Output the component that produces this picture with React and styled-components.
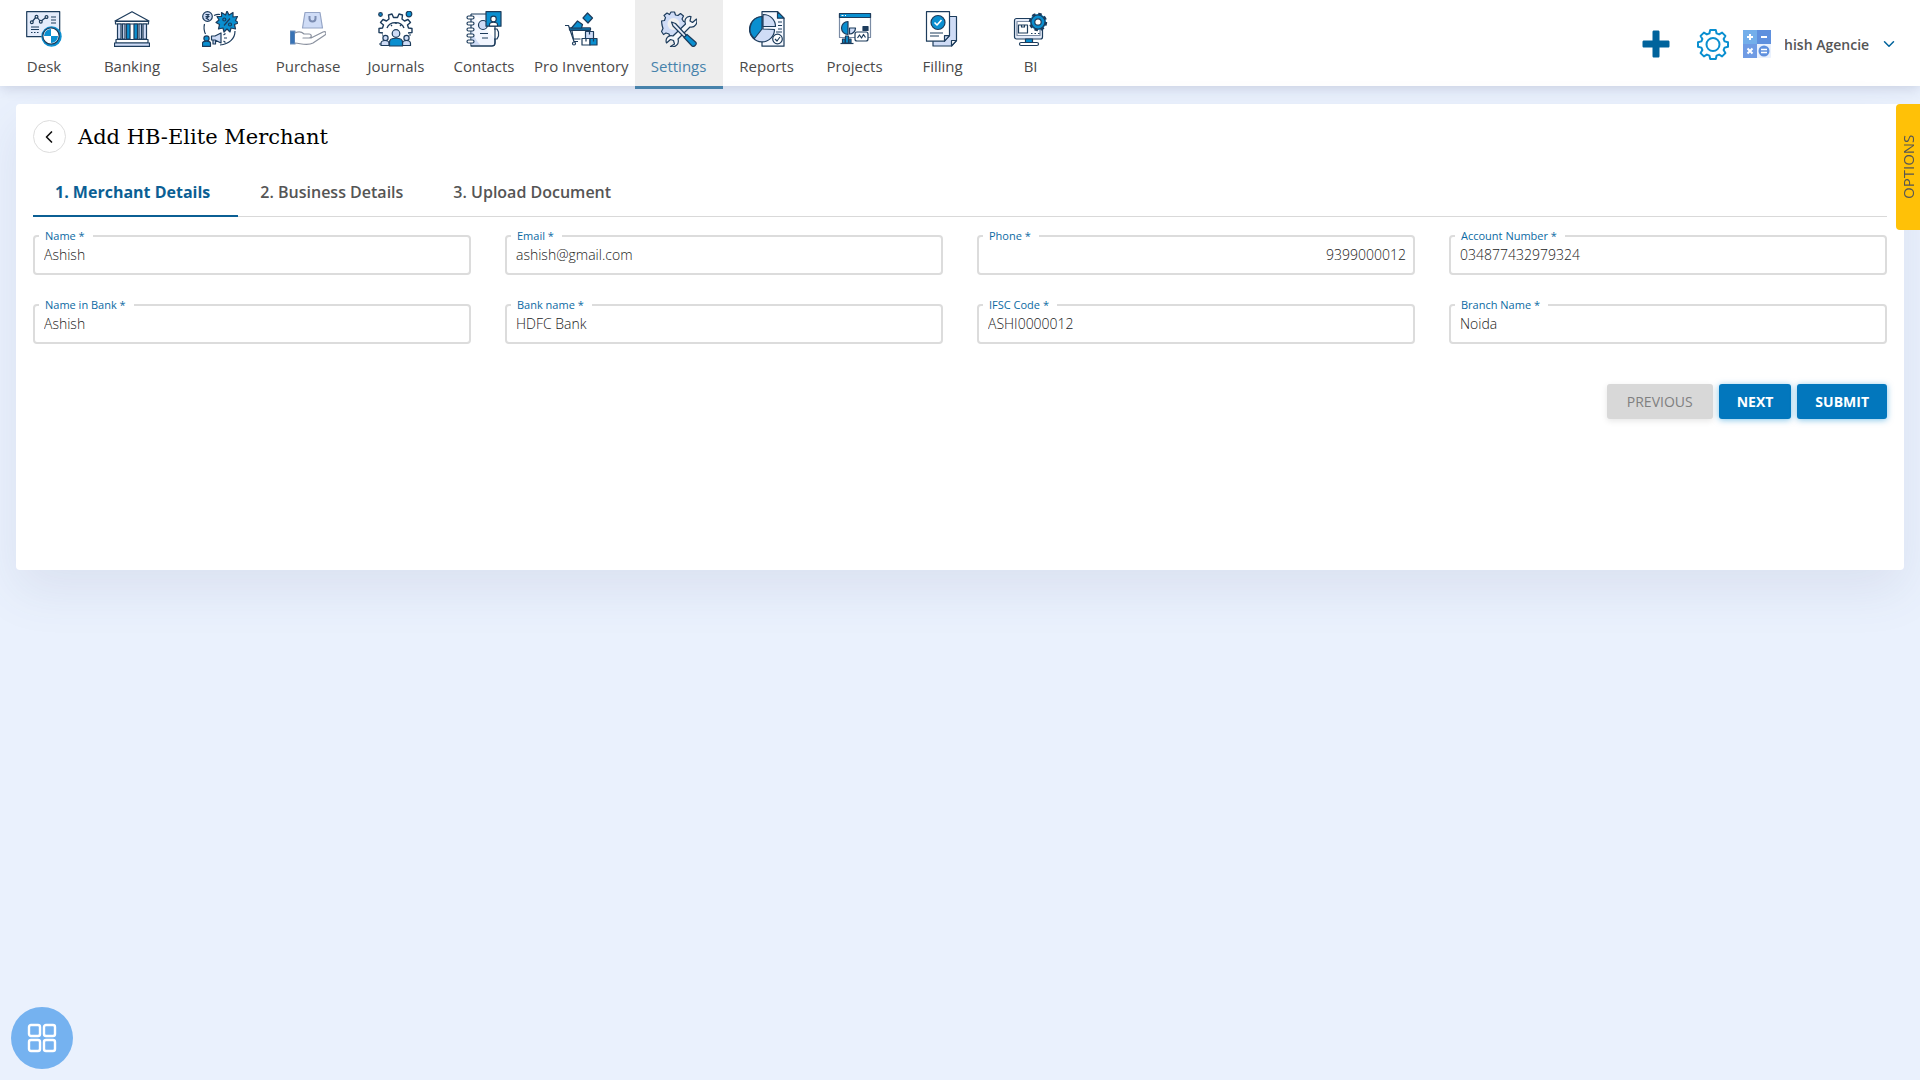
import { useState } from 'react';
import styled, { createGlobalStyle } from 'styled-components';
import { FiChevronDown, FiChevronLeft } from 'react-icons/fi';

const NAVY = '#1d3c5c';
const BLUE = '#0a8fd0';
const PALE = '#cfdcf6';

const GlobalStyle = createGlobalStyle`
* {
  box-sizing: border-box;
}
body {
  margin: 0;
  min-height: 100vh;
  background: #eaf1fd;
  color: #555;
  font-family: "Open Sans", "Noto Sans", sans-serif;
}
button, input {
  font-family: inherit;
}
`;

const icons = {
  desk: (
    <>
      <rect x="0.7" y="0.7" width="33" height="25" fill="#e4ecfb" />
      <path d="M5.5 11.5 L10.5 5.5 L14.5 10.5 L20.5 6" />
      <g fill="#fff">
        <circle cx="5.8" cy="11.2" r="1.4" />
        <circle cx="10.5" cy="5.8" r="1.4" />
        <circle cx="14.8" cy="10.8" r="1.4" />
        <circle cx="20.5" cy="6" r="1.4" />
      </g>
      <path d="M25 6h5M25 9h5M25 12h5M5 16h8M5 18.5h8M5 21.5h1.5M8 21.5h1.5M11 21.5h1.5" />
      <circle cx="25.5" cy="25.5" r="9.6" fill={BLUE} stroke={BLUE} />
      <circle cx="25" cy="25" r="8.2" fill="#fff" />
      <path d="M25 25V18a7 7 0 0 0-7 7zM25 25v7a7 7 0 0 0 7-7z" fill={BLUE} stroke="none" />
    </>
  ),
  banking: (
    <>
      <path d="M18 0.7L1 10h34z" fill="#fff" />
      <path d="M1.5 10.5h33v2.5h-33z" fill="#fff" />
      <path d="M3.5 13h3.5v15h-3.5zM29 13h3.5v15h-3.5zM8.5 13h2.5v15h-2.5zM25 13h2.5v15h-2.5z" fill={PALE} />
      <path d="M12.5 13h3.5v15h-3.5zM20 13h3.5v15h-3.5z" fill={BLUE} />
      <path d="M2 28.5h32v3.5H2z" fill="#fff" />
      <path d="M0.5 32h35v3.3h-35z" fill={PALE} />
    </>
  ),
  sales: (
    <>
      <circle cx="5.5" cy="5.5" r="4.8" fill={PALE} />
      <path d="M3.5 3.5h4M3.5 5.5h4M4 3.5c3 0 3 3.5 0 3.5l3 2" />
      <path d="M12 4.5c2-1 4-1.5 6-1M2.5 13c-1 4-.5 7 1 10M33 20c0 8-6 13-15 14" />
      <path
        d="M25 0l2 4 4-2.5 0 4.5 4.5-.5-2 4 3 2.500-4 1.500 1 4.500-4.500-1-1 4-3-3-3 3-1-4-4.500 1 1-4.500-3.500-2 3-2.500-2-3.500 4.500 0 0-4 4 2.500z"
        fill={BLUE}
      />
      <path d="M22 14.5l6-7" />
      <circle cx="22.3" cy="8.5" r="1.5" />
      <circle cx="28" cy="13.5" r="1.5" />
      <circle cx="4.5" cy="27.5" r="2.6" fill={BLUE} />
      <path d="M.5 35.300v-3c0-3 8-3 8 0v3z" fill={BLUE} />
      <path d="M9.500 25h3.500l6-3v10l-6-3H9.500zM11 29v4h2.500v-4" fill={PALE} />
      <path d="M21.500 24l2-1.500M22 27h3M21.500 30l2 1.500" />
    </>
  ),
  purchase: (
    <>
      <path d="M15 1.500h15l2.500 15.500h-20z" fill={PALE} stroke="#95a5c6" />
      <path d="M19.500 5v2.500c0 4 6 4 6 0V5" stroke="#7b8cb1" strokeWidth="2" />
      <path d="M0 20h5v13H0z" fill="#3873b5" stroke="#6c8fbd" />
      <path
        d="M5 22c4-2 7-1 9 1h5c3 0 3 4 0 4h-6 8l12-6c3-1 4 1 2 3L23 32c-5 3-10 1-18 0"
        fill="#fff"
        stroke="#8a919f"
      />
    </>
  ),
  journals: (
    <>
      <path
        d="M5 22l-4-.5 0-4 3.500-.5 1-3-3-2.500 2.500-3 3.500 1.500 2.500-2-.5-4 3.500-1 1.500 3.500h4l1.500-3.500 3.500 1-.5 4 2.500 2 3.500-1.500 2.500 3-3 2.500 1 3 3.500.5v4l-4 .5"
        fill="#fff"
        strokeWidth="1.4"
      />
      <path d="M9 17a9 8 0 0 1 17 0M13 15l1-1M18 12v1M23 15l-1-1" strokeWidth="1.4" />
      <circle cx="2.500" cy="3.500" r="1.800" fill={BLUE} />
      <circle cx="31" cy="3" r="2.800" fill={BLUE} />
      <path d="M1 33h2M4 24h1M31 24h2" />
      <g fill={PALE}>
        <circle cx="7.500" cy="27" r="2.600" />
        <path d="M3 34.500v-2c0-4 8-4 8 0v2z" />
        <circle cx="28.500" cy="27" r="2.600" />
        <path d="M24.500 34.500v-2c0-4 8-4 8 0v2z" />
        <circle cx="18" cy="22.500" r="3.800" />
      </g>
      <path d="M11.500 35v-4c0-5 13-5 13 0v4z" fill={BLUE} />
    </>
  ),
  contacts: (
    <>
      <path d="M5 3h24v11.500M5 3v32h21c2 0 3-1 3-3v-4" fill="#f2f6ff" />
      <path d="M5.500 18v16h9c-5-5-7-10-9-16z" fill={PALE} stroke="none" />
      <path d="M29 14.500v17c0 2-1 3.500-3 3.500H5M28 18h3l1.500 3v4L31 28h-3" />
      <g fill="#fff">
        <rect x="1" y="5" width="7" height="3" rx="1.500" />
        <rect x="1" y="11" width="7" height="3" rx="1.500" />
        <rect x="1" y="17" width="7" height="3" rx="1.500" />
        <rect x="1" y="23" width="7" height="3" rx="1.500" />
        <rect x="1" y="29" width="7" height="3" rx="1.500" />
      </g>
      <circle cx="17" cy="14" r="4.500" fill={PALE} />
      <path d="M14 22.500h8M16 27h6" />
      <rect x="20" y="0.700" width="15" height="14.500" fill={BLUE} />
      <circle cx="27.500" cy="8" r="2.800" fill="#fff" />
      <path d="M23.500 15v-1.500c0-3 8-3 8 0V15z" fill="#fff" />
    </>
  ),
  inventory: (
    <>
      <path d="M2 14.500h3.500l5.500 16h4" />
      <path d="M7 17h20v2.500H7.500zM9 20l1.500 8h7" fill="#fff" />
      <path d="M6.500 17h21v2h-21z" fill={BLUE} />
      <path d="M8.500 17l6-7 5 3.500-1 3.500z" fill={BLUE} />
      <path d="M24.500 2l5 5-4.500 5-5-5z" fill={BLUE} />
      <circle cx="11" cy="32.500" r="1.500" />
      <path d="M22.500 20.500h8v7h-8z" fill={PALE} />
      <path d="M19 27.500h8v6.500h-8z" fill="#fff" />
      <path d="M27 27.500h7v6.500h-7z" fill={BLUE} />
      <path d="M26.500 20.500v3M23 27.500v3M30.500 27.500v3" />
    </>
  ),
  settings: (
    <>
      <path
        d="M10 1h3.500l1 3 2.500.5 2.500-2 3 2.500-1.500 3 1.500 2.500 3 .5v3.500l-3 1-1 3 1 2.500-3 3-3-1.500-3 1-1 2.500H9l-1-3-3-1-2.500 1.500-2-3 1.500-3L1 14l-.5-4 3-.5 1-3L3 4.500l3-2.500 2.500 1.500z"
        fill={PALE}
      />
      <circle cx="12.500" cy="13" r="6" fill="#f0f0f0" stroke="none" />
      <path d="M30 5.500c-5-1-7 4-5.500 7.500L12 25c-5-1.500-8 3-6.500 7l4-3.500 3 1 1 3.500-4 2.500c5 1.500 9-2.500 7.500-7.500L29 16c5 1 8-4 6.500-8l-4 3.500-2.500-1.500z" fill="#f4f6fa" />
      <path d="M10.500 11l4 1.500 11 12-2 2-11.500-11.500z" fill="#e8edf8" />
      <path d="M23 26.500l3-3 9 8c1 2-2 5-4 3.500z" fill={BLUE} />
    </>
  ),
  reports: (
    <>
      <path d="M13 .7h15.500l6.500 6.500v28H13z" fill="#f5f8ff" />
      <path d="M28.500.7v6.500H35z" fill={BLUE} />
      <path d="M14 6a12.500 12.500 0 1 0 11.500 12.500L14 18z" fill={PALE} />
      <path d="M13 5.500a12.500 12.500 0 0 0-7.500 22L13 18z" fill={BLUE} />
      <path d="M14 3.500a12 12 0 0 1 12.500 12H14z" fill={PALE} />
      <path d="M29 11h4M29 14.500h4M29 18h4M27 21h6" />
      <circle cx="28.500" cy="28" r="4.800" fill="#fff" />
      <path d="M26 28l2 2 3-4" />
    </>
  ),
  projects: (
    <>
      <path d="M2.500 2.500h31v24h-31z" fill="#fff" stroke="#7b8ca5" />
      <path d="M2.500 2.500h31v4h-31z" fill={BLUE} />
      <path d="M4.500 4.500h2M8 4.500h1" stroke="#fff" />
      <path d="M11 10.500a6.500 6.500 0 0 0 0 13z" fill={BLUE} />
      <path d="M12.500 17h6a6 6 0 0 1-6 6z" fill={PALE} />
      <path d="M26 15.500h5v4h-5z" fill={NAVY} />
      <rect x="18" y="21" width="13" height="9" rx="2" fill="#fff" />
      <path d="M20.500 27l2-3 2 3 2-3.500 2 3" />
      <path d="M3.500 32.500h13" />
      <path d="M5.500 28h2.500v4h-2.500zM8.500 25h3v7h-3zM12 28h2v4h-2z" fill={BLUE} />
    </>
  ),
  filling: (
    <>
      <path d="M8 5.500h23.500v24l-5 5.500H8z" fill={PALE} />
      <path d="M31.500 29.500h-5V35z" fill="#fff" />
      <path d="M1.500.700h23v24l-5 5.500h-18z" fill="#fff" />
      <path d="M24.500 24.700h-5v5.500z" fill={PALE} />
      <circle cx="13" cy="11.500" r="7" fill={BLUE} />
      <path d="M9.500 11.500l2.500 2.500 4.500-5" stroke="#fff" strokeWidth="1.600" />
      <path d="M5 22h13M5 25h9" />
    </>
  ),
  bi: (
    <>
      <rect x="1.500" y="7.500" width="28" height="20.500" rx="2" fill="#e4ebf8" />
      <path d="M4 10.500h23v14H4z" fill="#fff" stroke="#7b8ca5" />
      <path d="M5.500 14h9v8h-9zM8.500 14v2h3v-2M18 22.500h1.500M21.500 22.500H23M25 22.500h1.500" />
      <circle cx="25" cy="11" r="8" fill={BLUE} strokeWidth="2.400" strokeDasharray="3.500 2.780" />
      <circle cx="25" cy="11" r="7" fill={BLUE} />
      <circle cx="25" cy="11" r="3.200" fill="#fff" />
      <path d="M12.500 28h7v3.500h-7z" fill={BLUE} />
      <rect x="6.500" y="31.500" width="19" height="3" rx="1.500" fill="#fff" />
    </>
  ),
};

const navItems = [
  { name: 'Desk', icon: 'desk' },
  { name: 'Banking', icon: 'banking' },
  { name: 'Sales', icon: 'sales' },
  { name: 'Purchase', icon: 'purchase' },
  { name: 'Journals', icon: 'journals' },
  { name: 'Contacts', icon: 'contacts' },
  { name: 'Pro Inventory', icon: 'inventory' },
  { name: 'Settings', icon: 'settings' },
  { name: 'Reports', icon: 'reports' },
  { name: 'Projects', icon: 'projects' },
  { name: 'Filling', icon: 'filling' },
  { name: 'BI', icon: 'bi' },
];

const tabs = ['1. Merchant Details', '2. Business Details', '3. Upload Document'];

const fields = [
  { id: 'name', label: 'Name *', value: 'Ashish' },
  { id: 'email', label: 'Email *', value: 'ashish@gmail.com' },
  { id: 'phone', label: 'Phone *', value: '9399000012', align: 'right' },
  { id: 'account', label: 'Account Number *', value: '034877432979324' },
  { id: 'bankHolder', label: 'Name in Bank *', value: 'Ashish' },
  { id: 'bank', label: 'Bank name *', value: 'HDFC Bank' },
  { id: 'ifsc', label: 'IFSC Code *', value: 'ASHI0000012' },
  { id: 'branch', label: 'Branch Name *', value: 'Noida' },
];

const NavIcon = ({ name }) => (
  <NavSvg viewBox="0 0 36 36" aria-hidden="true">{icons[name]}</NavSvg>
);

const GearIcon = () => (
  <svg width="32" height="32" viewBox="0 0 32 32" fill="none" stroke="#0a8fd0" strokeWidth="2" strokeLinejoin="round">
    <path d="M13.200 2h5.600l.8 3.400 2.500 1 3-1.800 3.300 3.300-1.800 3 1 2.500 3.400.8v4.600l-3.400.8-1 2.500 1.800 3-3.300 3.300-3-1.800-2.500 1-.8 3.400h-5.600l-.8-3.400-2.500-1-3 1.800-3.300-3.300 1.800-3-1-2.500L1 18.800v-4.600l3.400-.8 1-2.500-1.800-3 3.300-3.300 3 1.800 2.500-1z" />
    <circle cx="16" cy="16.500" r="6.500" />
  </svg>
);

const CalcIcon = () => (
  <svg width="28" height="28" viewBox="0 0 28 28" fill="none" stroke="#fff" strokeWidth="2">
    <rect width="28" height="28" rx="1" fill="#eaf1fd" stroke="none" />
    <path d="M0 0h14v14H0z" fill="#73aeea" stroke="none" />
    <path d="M14 0h14v14H14z" fill="#5f90de" stroke="none" />
    <path d="M0 14h14v14H0z" fill="#6f9be4" stroke="none" />
    <circle cx="21" cy="21" r="5.500" fill="#5f90de" stroke="none" />
    <path d="M4 7h6M7 4v6M18 7h6M4.500 18.500l5 5M9.500 18.500l-5 5" />
    <path d="M18 19.500h6M18 22.500h6" strokeWidth="1.300" />
  </svg>
);

const App = () => {
  const [activeTab, setActiveTab] = useState(0);

  return (
    <>
      <GlobalStyle />
      <Header>
        <Nav>
          {navItems.map((item) => (
            <NavLink key={item.name} href="#" $active={item.name === 'Settings'}>
              <NavIcon name={item.icon} />
              {item.name}
            </NavLink>
          ))}
        </Nav>
        <Tools>
          <IconButton aria-label="Add">
            <svg width="28" height="28" viewBox="0 0 28 28" fill="#00639c">
              <path d="M12 .500h4c1 0 1.500.5 1.500 1.500v8.500H26c1 0 1.500.5 1.500 1.500v4c0 1-.5 1.500-1.500 1.500h-8.500V26c0 1-.5 1.500-1.500 1.500h-4c-1 0-1.500-.5-1.500-1.500v-8.500H2c-1 0-1.500-.5-1.500-1.500v-4c0-1 .5-1.500 1.500-1.500h8.500V2c0-1 .5-1.500 1.500-1.500z" />
            </svg>
          </IconButton>
          <IconButton aria-label="Preferences"><GearIcon /></IconButton>
          <IconButton aria-label="Calculator"><CalcIcon /></IconButton>
          <Company aria-label="Company">
            <CompanyName>Ashish Agencies</CompanyName>
            <FiChevronDown size={18} />
          </Company>
        </Tools>
      </Header>

      <Card>
        <TitleRow>
          <BackButton aria-label="Back"><FiChevronLeft size={20} /></BackButton>
          <Title>Add HB-Elite Merchant</Title>
        </TitleRow>
        <Tabs role="tablist">
          {tabs.map((tab, index) => (
            <Tab
              key={tab}
              role="tab"
              aria-selected={index === activeTab}
              $active={index === activeTab}
              onClick={() => setActiveTab(index)}
            >
              {tab}
            </Tab>
          ))}
        </Tabs>
        <Form onSubmit={(e) => e.preventDefault()}>
          <Fields>
            {fields.map((field) => (
              <Field key={field.id}>
                <Legend><label htmlFor={field.id}>{field.label}</label></Legend>
                <Input id={field.id} defaultValue={field.value} $align={field.align} />
              </Field>
            ))}
          </Fields>
          <Actions>
            <ActionButton type="button" disabled>PREVIOUS</ActionButton>
            <ActionButton type="button">NEXT</ActionButton>
            <ActionButton type="submit">SUBMIT</ActionButton>
          </Actions>
        </Form>
      </Card>

      <OptionsButton>OPTIONS</OptionsButton>
      <AppsButton aria-label="Apps">
        <svg width="30" height="30" viewBox="0 0 30 30" fill="none" stroke="#fff" strokeWidth="2.400">
          <rect x="2" y="2" width="11" height="11" rx="2" />
          <rect x="17" y="2" width="11" height="11" rx="2" />
          <rect x="2" y="17" width="11" height="11" rx="2" />
          <rect x="17" y="17" width="11" height="11" rx="2" />
        </svg>
      </AppsButton>
    </>
  );
};

const Header = styled.header`
display: flex;
justify-content: space-between;
height: 86px;
background: #fff;
box-shadow: 0 2px 12px rgba(60, 70, 110, 0.2);
`;

const Nav = styled.nav`
display: flex;
`;

const NavLink = styled.a`
display: flex;
flex-direction: column;
align-items: center;
gap: 7px;
height: 89px;
min-width: 88px;
padding: 11px 6px 0;
border-bottom: 3px solid ${(props) => (props.$active ? '#4682ab' : 'transparent')};
background: ${(props) => (props.$active ? '#ededed' : 'transparent')};
color: ${(props) => (props.$active ? '#4682ab' : '#4a4a4a')};
font-size: 15px;
font-weight: 500;
line-height: 24px;
text-decoration: none;
white-space: nowrap;
`;

const NavSvg = styled.svg`
width: 36px;
height: 36px;
fill: none;
stroke: ${NAVY};
stroke-width: 1.2;
stroke-linejoin: round;
`;

const Tools = styled.div`
display: flex;
align-items: center;
padding: 2px 22px 0 0;
`;

const IconButton = styled.button`
display: flex;
padding: 0;
margin-right: 14px;
border: none;
background: none;
cursor: pointer;
&:first-child {
  margin-right: 27px;
}
`;

const Company = styled.button`
display: flex;
align-items: center;
gap: 11px;
padding: 0;
border: none;
background: none;
color: #00639c;
cursor: pointer;
`;

/* long names run past the box, as in a ticker */
const CompanyName = styled.span`
width: 84px;
padding-top: 2px;
overflow: hidden;
color: #555;
font-size: 14px;
font-weight: 600;
line-height: 20px;
text-align: left;
text-indent: -17px;
white-space: nowrap;
`;

const Card = styled.main`
min-height: 466px;
margin: 18px 16px 0;
padding: 16px 17px;
border-radius: 4px;
background: #fff;
box-shadow: 0 20px 50px rgba(80, 90, 130, 0.1);
`;

const TitleRow = styled.div`
display: flex;
align-items: center;
gap: 12px;
`;

const BackButton = styled.button`
display: flex;
align-items: center;
justify-content: center;
width: 33px;
height: 33px;
padding: 0 2px 0 0;
border: 1px solid #ddd;
border-radius: 50%;
background: #fff;
color: #111;
cursor: pointer;
`;

const Title = styled.h1`
margin: 0;
color: #000;
font-family: "DejaVu Serif", serif;
font-size: 21px;
font-weight: 400;
line-height: 32px;
`;

const Tabs = styled.div`
display: flex;
margin-top: 16px;
border-bottom: 1px solid #d9d9d9;
`;

const Tab = styled.button`
height: 48px;
margin-bottom: -1px;
padding: 0 28px 0 22px;
border: none;
border-bottom: 2px solid ${(props) => (props.$active ? '#0b5f94' : 'transparent')};
background: none;
color: ${(props) => (props.$active ? '#0b5f94' : '#555')};
font-size: 16px;
font-weight: ${(props) => (props.$active ? 700 : 600)};
cursor: pointer;
`;

const Form = styled.form`
padding-top: 12px;
`;

const Fields = styled.div`
display: grid;
grid-template-columns: repeat(4, 1fr);
gap: 23px 34px;
`;

const Field = styled.fieldset`
min-width: 0;
height: 46px;
margin: 0;
padding: 0;
border: 2px solid #dcdcdc;
border-radius: 4px;
`;

const Legend = styled.legend`
height: 14px;
margin-left: 4px;
padding: 0 8px 0 6px;
color: #0b6aa3;
font-size: 11px;
line-height: 14px;
`;

const Input = styled.input`
display: block;
width: 100%;
height: 22px;
padding: 0 7px 0 9px;
border: none;
outline: none;
background: none;
color: #222;
font-size: 14px;
font-weight: 300;
text-align: ${(props) => props.$align || 'left'};
`;

const Actions = styled.div`
display: flex;
justify-content: flex-end;
gap: 6px;
margin-top: 40px;
`;

const ActionButton = styled.button`
height: 35px;
padding: 0 18px;
border: none;
border-radius: 3px;
background: #0277bd;
box-shadow: 0 1px 6px rgba(2, 136, 209, 0.5);
color: #fff;
font-size: 14px;
font-weight: 700;
cursor: pointer;
&:disabled {
  padding: 0 20px;
  background: #d8d8d8;
  box-shadow: 0 2px 6px rgba(0, 0, 0, 0.1);
  color: #808080;
  font-weight: 500;
  cursor: default;
}
`;

const OptionsButton = styled.button`
position: fixed;
top: 104px;
right: 0;
width: 24px;
height: 126px;
padding: 0;
border: none;
border-radius: 0 4px 4px 0;
background: #ffc107;
color: #555;
font-size: 15px;
line-height: 24px;
writing-mode: vertical-rl;
transform: rotate(180deg);
cursor: pointer;
`;

const AppsButton = styled.button`
position: fixed;
bottom: 11px;
left: 11px;
display: flex;
align-items: center;
justify-content: center;
width: 62px;
height: 62px;
padding: 0;
border: none;
border-radius: 50%;
background: #75b2f0;
cursor: pointer;
`;

export default App;
